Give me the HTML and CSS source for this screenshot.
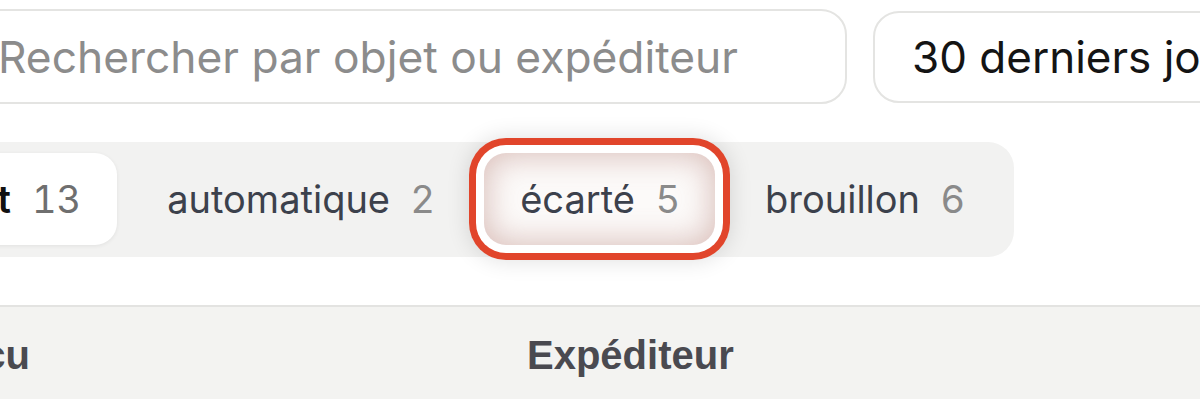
FILE: index.html
```html
<!DOCTYPE html>
<html lang="fr">
<head>
    <meta charset="UTF-8">
    <meta name="viewport" content="width=device-width, initial-scale=1.0">
    <title>Courriels reçus</title>
    <link rel="stylesheet" href="styles.css">
</head>
<body>
    <div class="page">
        <div class="toolbar">
            <div class="search-box">
                <input class="search-input" type="text" placeholder="Rechercher par objet ou expéditeur">
            </div>
            <div class="period-select">30 derniers jours</div>
        </div>

        <div class="tabs">
            <div class="tab active">Tout <span class="count">13</span></div>
            <div class="tab">automatique <span class="count">2</span></div>
            <div class="tab flagged">écarté <span class="count">5</span></div>
            <div class="tab">brouillon <span class="count">6</span></div>
        </div>

        <div class="table-head">
            <div class="col col-date">Reçu</div>
            <div class="col col-sender">Expéditeur</div>
        </div>
    </div>
</body>
</html>
```

FILE: styles.css
```css
body {
    margin: 0;
    background-color: #fff;
    font-family: Inter, "Noto Sans", sans-serif;
    overflow: hidden;
}

.page {
    margin-left: -113px;
    padding-top: 9px;
    width: 1600px;
}

.toolbar {
    display: flex;
    align-items: center;
    gap: 26px;
}

.search-box {
    width: 960px;
    height: 95px;
    box-sizing: border-box;
    border: 2px solid #e4e4e2;
    border-radius: 26px;
    display: flex;
    align-items: center;
    padding-left: 109px;
}

.search-input {
    border: none;
    outline: none;
    background: transparent;
    width: 100%;
    padding: 0;
    font-family: inherit;
    font-size: 44.3px;
    color: #1a1a1a;
}

.search-input::placeholder {
    color: #8c8c8c;
}

.period-select {
    width: 420px;
    height: 92px;
    box-sizing: border-box;
    border: 2px solid #e4e4e2;
    border-radius: 26px;
    display: flex;
    align-items: center;
    padding-left: 37px;
    font-size: 44px;
    color: #141414;
    white-space: nowrap;
}

.tabs {
    display: inline-flex;
    align-items: center;
    gap: 14px;
    margin-top: 38px;
    margin-left: -6px;
    padding: 11px 13px 12px 12px;
    background-color: #f2f2f1;
    border-radius: 26px;
}

.tab {
    height: 92px;
    box-sizing: border-box;
    display: flex;
    align-items: center;
    padding: 0 36px;
    border-radius: 22px;
    font-size: 38px;
    color: #3c414c;
    white-space: nowrap;
}

.tab .count {
    margin-left: 21px;
    color: #8a8a8a;
}

.tab.active {
    background-color: #fff;
    color: #111;
    font-weight: 600;
    box-shadow: 0 1px 4px rgba(0, 0, 0, 0.07);
}

.tab.active .count {
    font-weight: 400;
    color: #6f6f6f;
    font-variant-numeric: tabular-nums;
}

/* surlignage de l'onglet */
.tab.flagged {
    background-color: #fcfaf9;
    box-shadow:
        inset 0 0 30px 4px rgba(175, 115, 105, 0.42),
        0 0 0 8px #fff,
        0 0 0 15px #e1452b,
        0 0 22px 16px rgba(0, 0, 0, 0.12);
}

.table-head {
    display: flex;
    align-items: center;
    margin-top: 48px;
    height: 96px;
    border-top: 2px solid #e3e3e1;
    background-color: #f3f3f1;
    padding-left: 45px;
    font-family: "Liberation Sans", Arial, sans-serif;
    font-weight: bold;
    font-size: 40px;
    color: #4a4a50;
}

.col-date {
    width: 595px;
    flex-shrink: 0;
}
```
